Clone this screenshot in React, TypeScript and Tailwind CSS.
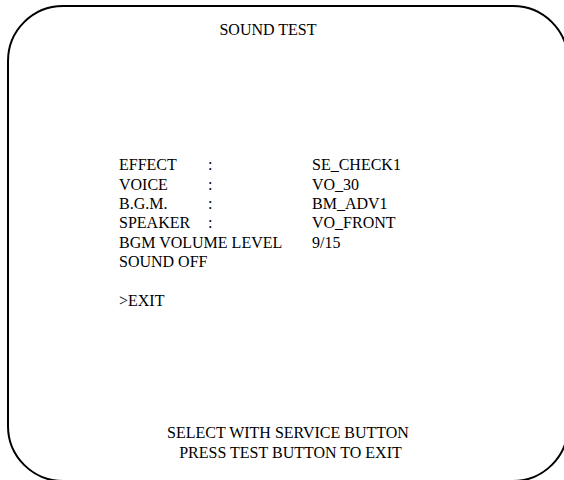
export default function App() {
  const rows = [
    { label: 'EFFECT', value: 'SE_CHECK1' },
    { label: 'VOICE', value: 'VO_30' },
    { label: 'B.G.M.', value: 'BM_ADV1' },
    { label: 'SPEAKER', value: 'VO_FRONT' },
  ]

  return (
    <div className="w-[564px] h-[480px] overflow-hidden bg-white text-black text-[16px] leading-[19.3px] font-['Liberation_Serif','Times_New_Roman','DejaVu_Serif',serif]">
      {/* Screen frame */}
      <div className="ml-[7px] mt-[5px] w-[562px] h-[477px] border-2 border-black rounded-[56px] flex flex-col">
        <div className="pt-[12.5px] pr-[40px] text-center">SOUND TEST</div>

        {/* Menu */}
        <div className="mt-[116.7px] pl-[110px]">
          {rows.map(row => (
            <div key={row.label} className="flex">
              <div className="w-[89px] shrink-0">{row.label}</div>
              <div className="w-[104px] shrink-0">:</div>
              <div>{row.value}</div>
            </div>
          ))}
          <div className="flex">
            <div className="w-[193px] shrink-0">BGM VOLUME LEVEL</div>
            <div>9/15</div>
          </div>
          <div>SOUND OFF</div>
          <div className="h-[19.3px]" />
          <div>&gt;EXIT</div>
        </div>

        {/* Footer */}
        <div className="mt-auto pb-[18px] text-center">
          <div>SELECT WITH SERVICE BUTTON</div>
          <div className="pl-[5px]">PRESS TEST BUTTON TO EXIT</div>
        </div>
      </div>
    </div>
  )
}
